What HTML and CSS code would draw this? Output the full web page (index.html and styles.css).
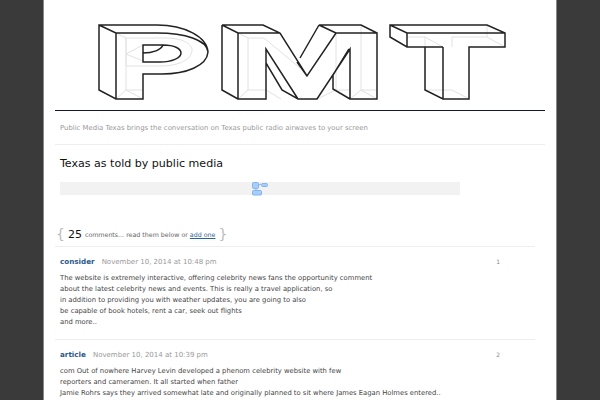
FILE: index.html
```html
<!DOCTYPE html>
<html lang="en">
<head>
<meta charset="utf-8">
<title>PMT</title>
<link rel="stylesheet" href="styles.css">
</head>
<body>
<div class="page">
  <header class="masthead">
    <svg class="logo" width="490" height="110" viewBox="55 0 490 110" aria-label="PMT">
      <g class="ghost">
        <path d="M126 38H165C183 38 192 44 192 50C192 60 178 66 160 66H126ZM126 38L116 33M126 54L143 61M126 54L143 45M126 38V90L116 99M126 90H143M126 90L143 99"/>
        <path d="M248 38L238 33M248 38V90L238 99M248 90H266L281 99M263 25L280 33M248 38H264L300 68M361 25V90H377M361 90L350 99M361 90L377 99M336 90H350M336 33V90L317 99"/>
        <path d="M407 37H425L443 47M425 37V90H452M452 90L469 99M452 47V37H487V25M487 37L505 47"/>
      </g>
      <g class="ink">
        <path d="M99 25H157C185 25 207 37 208 52C207 66 186 74 162 74H143V99H116L99 90ZM99 25L116 33V99M116 33H157C185 33 207 40 208 52"/>
        <path d="M143 45H163C175 45 181 49 181 53C181 58 172 62 160 62H143ZM143 53C153 53 161 50 163 45"/>
        <path d="M222 25H263L280 33L307 76L336 33H377V99H350V49L317 99H298L282 90L266 63V49L298 99M222 25L238 33H280M238 33V99H266V49M238 99L222 90V25M319 25H361L377 33M319 25L336 33M319 25L300 58M307 76L297 62M350 99L333 89V75L349 49"/>
        <path d="M390 25H487L505 33V47H469V99H443L425 90V47H407L390 37ZM390 25L407 33H505M407 33V47M443 47V99M425 47H443"/>
      </g>
    </svg>
  </header>
  <p class="tagline">Public Media Texas brings the conversation on Texas public radio airwaves to your screen</p>
  <h1 class="title">Texas as told by public media</h1>
  <div class="embed">
    <svg class="embed-icon" width="16" height="14" viewBox="0 0 16 14" aria-hidden="true">
      <path class="embed-link" d="M5 4L9 2M4 6V9"/>
      <rect class="embed-box" x="0.5" y="0.5" width="6" height="6" rx="1"/>
      <rect class="embed-box" x="9.5" y="1.5" width="6" height="3" rx="1"/>
      <rect class="embed-box" x="0.5" y="8.5" width="9" height="4.5" rx="1"/>
    </svg>
  </div>
  <div class="count">
    <span class="brace">{</span><span class="num">25</span><span class="count-text">comments... read them below or <a href="#">add one</a></span><span class="brace">}</span>
  </div>
  <ol class="comments">
    <li class="comment">
      <div class="meta">
        <a class="author" href="#">consider</a><span class="date">November 10, 2014 at 10:48 pm</span><span class="index">1</span>
      </div>
      <p class="body">The website is extremely interactive, offering celebrity news fans the opportunity comment<br>about the latest celebrity news and events. This is really a travel application, so<br>in addition to providing you with weather updates, you are going to also<br>be capable of book hotels, rent a car, seek out flights<br>and more..</p>
    </li>
    <li class="comment">
      <div class="meta">
        <a class="author" href="#">article</a><span class="date">November 10, 2014 at 10:39 pm</span><span class="index">2</span>
      </div>
      <p class="body">com Out of nowhere Harvey Levin developed a phenom celebrity website with few<br>reporters and cameramen. It all started when father<br>Jamie Rohrs says they arrived somewhat late and originally planned to sit where James Eagan Holmes entered..</p>
    </li>
  </ol>
</div>
</body>
</html>
```
FILE: styles.css
```css
html, body {
  margin: 0;
  height: 400px;
  overflow: hidden;
  background: #3a3a3a;
  font-family: "DejaVu Sans", sans-serif;
}
.page {
  box-sizing: border-box;
  width: 514px;
  height: 400px;
  margin: 0 auto;
  padding: 0 11px;
  background: #fff;
  border-left: 1px solid #888;
  border-right: 1px solid #888;
  overflow: hidden;
}
.masthead {
  height: 110px;
  border-bottom: 1px solid #16163a;
}
.logo {
  display: block;
  width: 490px;
  height: 110px;
}
.ink, .ghost {
  fill: none;
}
.ink {
  stroke: #222;
  stroke-width: 1.5;
}
.ghost {
  stroke: #e2e2e2;
  stroke-width: 1;
}
.tagline {
  margin: 0;
  padding: 12px 5px 10px;
  height: 11px;
  line-height: 11px;
  font-size: 6.9px;
  color: #999;
  border-bottom: 1px solid #eee;
}
.title {
  margin: 0;
  padding: 11px 5px 0;
  height: 26px;
  line-height: 16px;
  font-size: 11.05px;
  font-weight: 400;
  color: #111;
}
.embed {
  display: flex;
  justify-content: center;
  align-items: flex-start;
  width: 400px;
  height: 13px;
  margin-left: 5px;
  background: #f2f2f2;
}
.embed-icon {
  flex: none;
}
.embed-box {
  fill: #a9cdf9;
  stroke: #7fb3f2;
  stroke-width: 1;
}
.embed-link {
  fill: none;
  stroke: #7fb3f2;
}
.count {
  display: flex;
  align-items: center;
  height: 16px;
  margin-top: 31px;
  padding: 0 5px 0 1px;
  color: #111;
}
.brace {
  font-size: 14px;
  color: #bbb;
}
.num {
  font-size: 11px;
  margin: 0 3px;
}
.count-text {
  font-size: 6.3px;
  color: #666;
  margin-right: 3px;
}
.count-text a {
  color: #2a6496;
}
.comments {
  list-style: none;
  margin: 4px 10px 0 0;
  padding: 0;
}
.comment {
  box-sizing: border-box;
  height: 93px;
  padding: 9px 5px 0;
  border-top: 1px solid #eee;
}
.meta {
  display: flex;
  align-items: baseline;
  height: 12px;
  line-height: 12px;
}
.author {
  font-size: 7.2px;
  font-weight: 700;
  color: #2b5a8c;
  text-decoration: none;
}
.date {
  font-size: 7px;
  color: #999;
  margin-left: 7px;
}
.index {
  margin-left: auto;
  margin-right: 30px;
  font-size: 6px;
  color: #888;
}
.body {
  margin: 5px 0 0;
  font-size: 6.8px;
  line-height: 11px;
  color: #444;
  white-space: nowrap;
}
```
